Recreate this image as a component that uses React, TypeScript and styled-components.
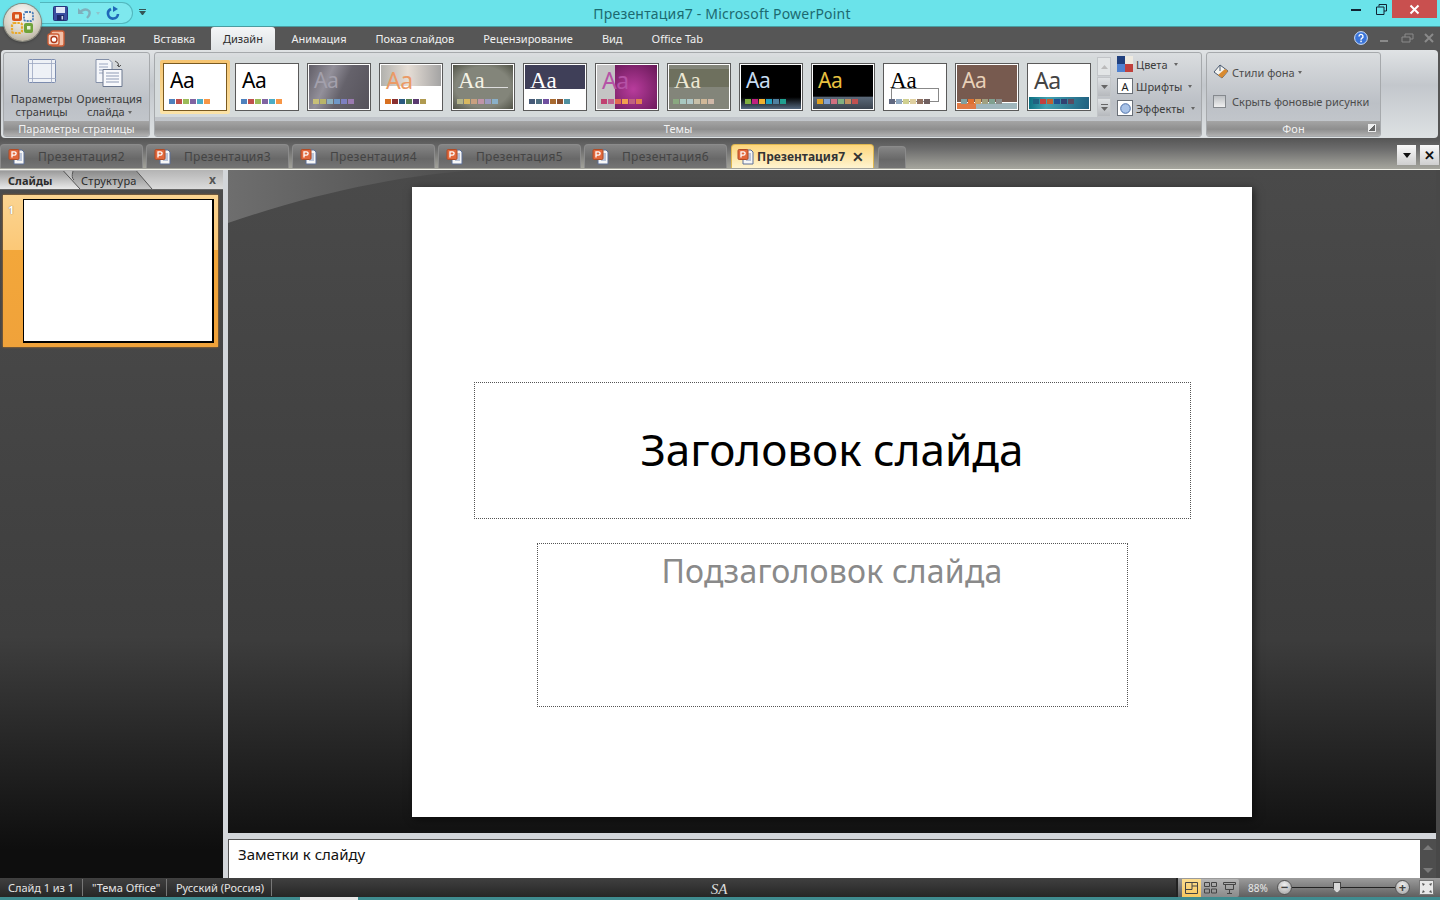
import React from "react";
import styled, { createGlobalStyle } from "styled-components";

const Global = createGlobalStyle`
  html, body { margin: 0; padding: 0; background: #000; }
  body { font-family: "Noto Sans", "Liberation Sans", sans-serif; font-size: 11px; }
  * { box-sizing: border-box; }
`;

const Window = styled.div`
  position: relative;
  width: 1440px;
  height: 900px;
  overflow: hidden;
  display: flex;
  flex-direction: column;
  background: #555;
`;

/* ---------- title bar ---------- */
const TitleBar = styled.div`
  height: 26px;
  flex: none;
  display: grid;
  grid-template-columns: 1fr auto 1fr;
  background: #6ae3ea;
  padding-left: 4px;
`;
const Qat = styled.div`
  display: flex;
  align-items: center;
  height: 22px;
  width: 93px;
  margin: 2px 0 0 36px;
  padding-left: 13px;
  border: 1px solid #52b6bd;
  border-left: none;
  border-radius: 0 12px 12px 0;
  background: #7ee8ee;
`;
const QatRow = styled.div`
  display: flex;
  align-items: flex-start;
`;
const QatGap = styled.span`
  width: 9px;
`;
const QatCaret = styled.span`
  margin: 0 6px 0 4px;
  border: 2.5px solid transparent;
  border-top: 3px solid #8ec4cc;
  border-bottom: none;
`;
const QatMore = styled.span`
  margin: 9px 0 0 6px;
  width: 7px;
  height: 6px;
  border-top: 1px solid #355;
  &::after {
    content: "";
    display: block;
    margin-top: 1px;
    border: 3px solid transparent;
    border-top: 4px solid #355;
    border-bottom: none;
  }
`;
const Title = styled.div`
  font-size: 14px;
  line-height: 27px;
  color: #1c6a70;
  letter-spacing: 0.2px;
`;
const WinControls = styled.div`
  display: flex;
  justify-content: flex-end;
  align-items: flex-start;
  padding-right: 3px;
`;
const WinBtn = styled.div<{ $w: number; $close?: boolean }>`
  width: ${(p) => p.$w}px;
  height: 18px;
  display: flex;
  align-items: center;
  justify-content: center;
  padding-top: ${(p) => (p.$close ? 0 : 1)}px;
  background: ${(p) => (p.$close ? "#c9504f" : "transparent")};
`;

const OfficeButton = styled.div`
  position: absolute;
  left: 4px;
  top: 4px;
  width: 37px;
  height: 37px;
  border-radius: 50%;
  background: radial-gradient(circle at 50% 30%, #fdfdfd 0%, #d9d4c8 55%, #a49c88 100%);
  box-shadow: 0 0 0 1px #8a8a80, 0 1px 3px rgba(0, 0, 0, 0.5);
  display: flex;
  align-items: center;
  justify-content: center;
`;

/* ---------- ribbon tabs ---------- */
const TabBar = styled.div`
  height: 24px;
  flex: none;
  display: flex;
  align-items: flex-end;
  padding-left: 46px;
  background: #565656;
  border-top: 1px solid #4a9ca0;
`;
const AddIn = styled.div`
  width: 20px;
  height: 23px;
  margin-right: 2px;
  display: flex;
  align-items: center;
  justify-content: center;
`;
const RibbonTab = styled.div<{ $active?: boolean; $wide?: boolean }>`
  height: 23px;
  padding: 0 12px;
  margin: 0 ${(p) => (p.$wide ? 2.5 : 2)}px;
  line-height: 24px;
  font-size: 11px;
  border-radius: 3px 3px 0 0;
  color: ${(p) => (p.$active ? "#2b2b2b" : "#f0f0f0")};
  background: ${(p) => (p.$active ? "linear-gradient(#f4f6f7, #dfe3e5)" : "transparent")};
`;
const TabSpacer = styled.div`
  flex: 1;
`;
const SmallControls = styled.div`
  display: flex;
  align-items: center;
  gap: 9px;
  height: 23px;
  padding-right: 5px;
  padding-bottom: 2px;
  color: #8d8d8d;
`;

/* ---------- ribbon ---------- */
const Ribbon = styled.div`
  height: 88px;
  flex: none;
  width: 1437px;
  margin-left: 1px;
  display: flex;
  gap: 4px;
  padding: 2px 0 1px 2px;
  border-radius: 4px;
  background: linear-gradient(#e0e3e5, #c3c7cc 40%, #dde1e3);
`;
const Group = styled.div<{ $w: number }>`
  width: ${(p) => p.$w}px;
  flex: none;
  display: flex;
  flex-direction: column;
  border: 1px solid #a6a9ac;
  border-radius: 3px;
  overflow: hidden;
  background: linear-gradient(#dadddf, #bcc0c6 60%, #c6cace);
`;
const GroupBody = styled.div`
  flex: 1;
  display: flex;
  min-height: 0;
`;
const GroupLabel = styled.div`
  position: relative;
  height: 15px;
  flex: none;
  text-align: center;
  line-height: 15px;
  font-size: 11px;
  color: #f2f2f2;
  background: linear-gradient(#a5a5a5, #8e8e8e 55%, #b0b0b0);
`;
const Launcher = styled.span`
  position: absolute;
  right: 4px;
  top: 3px;
  width: 8px;
  height: 8px;
  border: 1px solid #eee;
  background: linear-gradient(135deg, #eee 50%, #666 50%);
`;
const BigButtons = styled.div`
  display: flex;
  justify-content: center;
  gap: 4px;
  flex: 1;
  padding-top: 5px;
`;
const BigButton = styled.div`
  display: flex;
  flex-direction: column;
  align-items: center;
  color: #3c3c3c;
  line-height: 13px;
  font-size: 11px;
  text-align: center;
`;
const BigIcon = styled.div`
  height: 34px;
`;
const Arrow = styled.span`
  display: inline-block;
  margin-left: 3px;
  vertical-align: 2px;
  border: 2.5px solid transparent;
  border-top: 3px solid #666;
  border-bottom: none;
`;

const Gallery = styled.div`
  width: 942px;
  flex: none;
  margin-top: 4px;
  height: 60px;
  display: flex;
  align-items: center;
  gap: 8px;
  padding-left: 8px;
  background: #d5dadb;
`;
const TileFrame = styled.div<{ $sel?: boolean }>`
  flex: none;
  padding: 3px;
  margin: 0 -3px;
  background: ${(p) => (p.$sel ? "linear-gradient(#f6c470, #fbe3a8)" : "transparent")};
  border-radius: 2px;
`;
const Tile = styled.div<{ $bg: string; $sel?: boolean }>`
  position: relative;
  width: 64px;
  height: 48px;
  overflow: hidden;
  border: 1px solid ${(p) => (p.$sel ? "#7a5a20" : "#5a5a5a")};
  box-shadow: inset 0 0 0 1px #fff;
  background: ${(p) => p.$bg};
  display: flex;
  flex-direction: column;
`;
const TileBand = styled.div<{ $bg: string; $h: number }>`
  position: absolute;
  left: 1px;
  right: 1px;
  bottom: 1px;
  height: ${(p) => p.$h}px;
  background: ${(p) => p.$bg};
`;
const TileOutline = styled.div`
  position: absolute;
  left: 7px;
  top: 24px;
  width: 48px;
  height: 14px;
  border: 1px solid #888;
`;
const TileAa = styled.div<{ $c: string; $serif?: boolean; $big?: boolean }>`
  position: relative;
  height: 33px;
  padding-left: 6px;
  font-family: ${(p) => (p.$serif ? '"Liberation Serif", serif' : '"Noto Sans", sans-serif')};
  font-size: ${(p) => (p.$big ? 23 : p.$serif ? 23 : 21)}px;
  letter-spacing: ${(p) => (p.$serif ? 0 : -0.5)}px;
  line-height: 33px;
  color: ${(p) => p.$c};
`;
const SwatchRow = styled.div`
  position: relative;
  display: flex;
  gap: 1px;
  padding-left: 5px;
  margin-top: 2px;
`;
const Swatch = styled.i<{ $c: string }>`
  display: block;
  width: 6px;
  height: 5px;
  background: ${(p) => p.$c};
`;
const Scroller = styled.div`
  width: 14px;
  flex: none;
  margin-top: 4px;
  height: 60px;
  display: flex;
  flex-direction: column;
  gap: 1px;
  position: relative;
`;
const ScrollBtn = styled.div<{ $dim?: boolean }>`
  flex: 1;
  display: flex;
  align-items: center;
  justify-content: center;
  border: 1px solid #c2c5c8;
  background: ${(p) => (p.$dim ? "#e2e5e6" : "linear-gradient(#dfe2e4, #b6b9bd)")};
  color: #777;
`;
const ThemeOptions = styled.div`
  display: flex;
  flex-direction: column;
  gap: 6px;
  margin: 3px 0 0 6px;
`;
const OptionRow = styled.div`
  display: flex;
  align-items: center;
  gap: 3px;
  height: 16px;
  color: #3c3c3c;
`;
const OptIcon = styled.div`
  width: 16px;
  height: 16px;
  border: 1px solid #6a7078;
  background: #fff;
  display: flex;
  align-items: center;
  justify-content: center;
  font-size: 11px;
  color: #222;
`;
const FonBody = styled.div`
  flex: 1;
  display: flex;
  flex-direction: column;
  gap: 13px;
  padding: 11px 0 0 6px;
  color: #4c4c4c;
`;
const FonRow = styled.div`
  display: flex;
  align-items: center;
  height: 16px;
`;
const FonText = styled.span`
  margin-left: 2px;
`;
const Check = styled.span`
  width: 13px;
  height: 13px;
  margin-right: 6px;
  border: 1px solid #85898e;
  background: linear-gradient(#bcbfc3, #f0f0f0);
`;

/* ---------- document tabs ---------- */
const DocBar = styled.div`
  height: 32px;
  flex: none;
  display: flex;
  align-items: flex-end;
  padding: 0 1px 1px 0;
  gap: 3px;
  background: linear-gradient(#555 0%, #6c6c6c 35%, #a6a69e 100%);
  border-bottom: 1px solid #f2f2ea;
`;
const DocTab = styled.div<{ $active?: boolean; $empty?: boolean }>`
  width: ${(p) => (p.$empty ? 28 : 143)}px;
  height: ${(p) => (p.$empty ? 22 : 24)}px;
  flex: none;
  display: flex;
  align-items: center;
  padding-left: ${(p) => (p.$active ? 5 : 7)}px;
  border-radius: 4px 4px 0 0;
  border: 1px solid ${(p) => (p.$active ? "#e0b850" : "#8b8b8b")};
  border-bottom: none;
  font-size: 12px;
  font-weight: ${(p) => (p.$active ? 700 : 400)};
  letter-spacing: ${(p) => (p.$active ? 0 : 0.3)}px;
  color: ${(p) => (p.$active ? "#333" : "#444")};
  background: ${(p) =>
    p.$active ? "linear-gradient(#fdd67c, #fff4d0)" : "linear-gradient(#858585, #686868 60%, #747474)"};
  margin-left: ${(p) => (p.$active || p.$empty ? 1 : 0)}px;
`;
const DocName = styled.span<{ $active?: boolean }>`
  margin-left: ${(p) => (p.$active ? 3 : 13)}px;
`;
const DocClose = styled.span`
  margin-left: 7px;
  font-size: 14px;
  font-weight: 700;
  color: #333;
`;
const DocSpacer = styled.div`
  flex: 1;
`;
const DocBtn = styled.div`
  width: 19px;
  height: 20px;
  margin: 0 0 3px 1px;
  display: flex;
  align-items: center;
  justify-content: center;
  background: linear-gradient(#fafafa, #cfcfcf);
  color: #111;
  font-size: 13px;
  font-weight: 700;
  line-height: 1;
`;
const DownTri = styled.span`
  border: 4px solid transparent;
  border-top: 5px solid #111;
  border-bottom: none;
`;

/* ---------- body ---------- */
const Body = styled.div`
  flex: 1;
  min-height: 0;
  display: flex;
`;
const LeftPane = styled.div`
  width: 223px;
  flex: none;
  display: flex;
  flex-direction: column;
  background: linear-gradient(#4c4c4c 0%, #3e3e3e 66%, #0e0e0e 96%);
`;
const PaneTabs = styled.div`
  position: relative;
  height: 20px;
  flex: none;
  display: flex;
  align-items: stretch;
  padding-top: 1px;
  background: linear-gradient(#b4b4b4, #dcdcdc);
  border-bottom: 1px solid #666;
`;
const PaneTab = styled.div<{ $active?: boolean }>`
  position: relative;
  z-index: ${(p) => (p.$active ? 1 : 0)};
  width: ${(p) => (p.$active ? 80 : 79)}px;
  margin-right: -7px;
  padding-left: 8px;
  line-height: 20px;
  font-size: 11px;
  font-weight: ${(p) => (p.$active ? 700 : 400)};
  letter-spacing: ${(p) => (p.$active ? 0 : 0.25)}px;
  color: #2b2b2b;
  clip-path: polygon(0 0, 80% 0, 100% 100%, 0 100%);
  background: ${(p) => (p.$active ? "linear-gradient(#9b9b9b, #eaeaea)" : "linear-gradient(#8a8a8a, #c8c8c8)")};
`;
const PaneEdges = styled.svg`
  position: absolute;
  left: 0;
  top: 0;
  z-index: 2;
`;
const PaneClose = styled.div`
  margin-left: auto;
  padding-right: 7px;
  font-size: 12px;
  line-height: 18px;
  font-weight: 700;
  color: #555;
`;
const Thumb = styled.div`
  margin: 5px 0 0 3px;
  width: 215px;
  height: 152px;
  padding: 4px 4px 4px 20px;
  position: relative;
  background: linear-gradient(#fbd491 0%, #fbc877 36%, #f3a73a 36%, #f0a23a 100%);
  box-shadow: 0 0 2px #c07820;
`;
const ThumbNum = styled.span`
  position: absolute;
  left: 5px;
  top: 7px;
  font-size: 11px;
  font-weight: 700;
  color: #fff;
  text-shadow: 0 0 1px #543;
`;
const ThumbSlide = styled.div`
  width: 191px;
  height: 144px;
  background: #fff;
  border: 1px solid #000;
  border-right-width: 2px;
  border-bottom-width: 2px;
`;
const Splitter = styled.div`
  width: 5px;
  flex: none;
  background: #d3d6da;
`;
const RightCol = styled.div`
  flex: 1;
  min-width: 0;
  display: flex;
  flex-direction: column;
`;
const Stage = styled.div`
  position: relative;
  height: 663px;
  flex: none;
  padding: 17px 0 0 184px;
  background: linear-gradient(#4a4a4a 0%, #3c3c3c 71%, #121212 100%);
  border-right: 4px solid #484848;
  overflow: hidden;
`;
const Swoosh = styled.svg`
  position: absolute;
  left: 0;
  top: 0;
`;
const Slide = styled.div`
  position: relative;
  width: 840px;
  height: 630px;
  background: #fff;
  box-shadow: 2px 2px 8px rgba(0, 0, 0, 0.55);
  display: flex;
  flex-direction: column;
  align-items: center;
  padding-top: 195px;
  gap: 24px;
`;
const Placeholder = styled.div<{ $w: number; $h: number }>`
  width: ${(p) => p.$w}px;
  height: ${(p) => p.$h}px;
  border: 1px dotted #555;
  text-align: center;
`;
const SlideTitle = styled.div`
  font-size: 44px;
  line-height: 137px;
  color: #000;
  margin-top: -2px;
`;
const SlideSub = styled.div`
  font-size: 32px;
  line-height: 54px;
  color: #8a8a8a;
  letter-spacing: 0.2px;
`;
const HSplit = styled.div`
  height: 6px;
  flex: none;
  background: #d3d6da;
  border-right: 4px solid #484848;
`;
const NotesRow = styled.div`
  flex: 1;
  display: flex;
  min-height: 0;
`;
const Notes = styled.div`
  width: 1192px;
  flex: none;
  padding-left: 9px;
  background: #fff;
  border-top: 1px solid #555;
  border-left: 1px solid #555;
  font-size: 15px;
  line-height: 29px;
  color: #111;
`;
const NotesScroll = styled.div`
  width: 16px;
  flex: none;
  display: flex;
  flex-direction: column;
  justify-content: space-between;
  align-items: center;
  padding: 6px 0 5px;
  background: #4e4e4e;
`;
const NotesEdge = styled.div`
  flex: 1;
  background: #484848;
`;
const Tri = styled.span<{ $up?: boolean }>`
  border: 5px solid transparent;
  ${(p) => (p.$up ? "border-bottom: 5px solid #7a7a7a; border-top: none;" : "border-top: 5px solid #7a7a7a; border-bottom: none;")}
`;

/* ---------- status bar ---------- */
const Status = styled.div`
  height: 19px;
  flex: none;
  display: flex;
  align-items: stretch;
  color: #e4e4e4;
  font-size: 11px;
  background: linear-gradient(#404040, #262626);
`;
const StatusItem = styled.div<{ $w: number; $pad?: number }>`
  width: ${(p) => p.$w}px;
  flex: none;
  padding-left: ${(p) => p.$pad ?? 8}px;
  line-height: 17px;
  letter-spacing: -0.04px;
  border-right: 1px solid #777;
  margin: 1px 0;
`;
const Signature = styled.div`
  flex: 1;
  text-align: center;
  padding-right: 10px;
  font-family: "Liberation Serif", serif;
  font-style: italic;
  font-size: 15px;
  line-height: 22px;
  color: #dcdcdc;
`;
const ZoomArea = styled.div`
  width: 264px;
  flex: none;
  display: flex;
  align-items: center;
  padding-left: 4px;
  background: linear-gradient(#9c9c9c, #5f5f5f);
  border-left: 2px solid #222;
`;
const Views = styled.div`
  display: flex;
  height: 18px;
  border-radius: 2px;
  background: linear-gradient(#b5b5b5, #8a8a8a);
`;
const ViewBtn = styled.div<{ $on?: boolean }>`
  width: 19px;
  display: flex;
  align-items: center;
  justify-content: center;
  background: ${(p) => (p.$on ? "linear-gradient(#fbdc8e, #f8c860)" : "transparent")};
`;
const ZoomPct = styled.span`
  width: 20px;
  margin: 0 9px 0 9px;
  color: #e8e8e8;
  font-size: 10px;
`;
const RoundBtn = styled.div`
  width: 15px;
  height: 15px;
  flex: none;
  border-radius: 50%;
  border: 1px solid #555;
  background: radial-gradient(circle at 50% 30%, #f0f0f0, #a0a0a0);
  display: flex;
  align-items: center;
  justify-content: center;
  font-size: 13px;
  line-height: 1;
  font-weight: 700;
  color: #444;
`;
const Track = styled.div`
  position: relative;
  width: 103px;
  flex: none;
  height: 1px;
  background: #222;
`;
const Thumbler = styled.span`
  position: absolute;
  left: 41px;
  top: -5px;
  width: 8px;
  height: 11px;
  background: #d8d8d8;
  border: 1px solid #444;
  clip-path: polygon(0 0, 100% 0, 100% 60%, 50% 100%, 0 60%);
`;
const FitBtn = styled.div`
  width: 15px;
  height: 15px;
  margin-left: 9px;
  border: 1px solid #777;
  background: #e8e8e8;
  display: flex;
  align-items: center;
  justify-content: center;
`;
const TaskStrip = styled.div`
  height: 3px;
  flex: none;
  display: flex;
  background: #3f8c90;
`;
const TaskItem = styled.div`
  width: 58px;
  margin-left: 300px;
  background: #e8e8e8;
`;

/* ---------- drawings ---------- */
const PptIcon = () => (
  <svg width="17" height="17" viewBox="0 0 17 17">
    <path d="M6 2h8l2 2v12H6z" fill="#f6f6f6" stroke="#5c6f96" />
    <path d="M9 6h5M9 8h5M9 10h5M9 12h5" stroke="#7f93bd" />
    <rect x="1" y="1.5" width="10" height="10" rx="1.2" fill="#e2683c" stroke="#b04a24" />
    <path d="M4 9.5V3.8h2.4a1.6 1.6 0 0 1 0 3.4H4" fill="none" stroke="#fff" strokeWidth="1.3" />
  </svg>
);

const OfficeLogo = () => (
  <svg width="27" height="27" viewBox="0 0 27 27">
    <rect x="3" y="3" width="10" height="9" rx="2" fill="#d8541e" />
    <rect x="6" y="5.5" width="4" height="4" fill="#f8e4c8" />
    <rect x="15" y="3" width="9" height="9" rx="2" fill="none" stroke="#4d7fb8" strokeWidth="1.8" strokeDasharray="2 1" />
    <rect x="3" y="14" width="10" height="10" rx="2" fill="none" stroke="#e9a92b" strokeWidth="2.2" strokeDasharray="2.4 1" />
    <rect x="15" y="14" width="9" height="10" rx="2" fill="#6fa33a" />
    <rect x="18" y="17" width="3.5" height="3.5" fill="#e8f2d8" />
  </svg>
);

const SaveIcon = () => (
  <svg width="15" height="15" viewBox="0 0 15 15">
    <rect x="0.5" y="0.5" width="14" height="14" rx="1" fill="#3a4ea0" stroke="#27347a" />
    <rect x="3" y="1" width="9" height="6" fill="#dfe6f6" />
    <rect x="4" y="9" width="7" height="5.5" fill="#1c2a6a" />
    <rect x="8.5" y="10" width="1.6" height="3.5" fill="#c8d0e8" />
  </svg>
);

const UndoIcon = () => (
  <svg width="15" height="14" viewBox="0 0 15 14">
    <path d="M2 7 Q8 1 12 5 Q14 8 10 12" fill="none" stroke="#7fb0bc" strokeWidth="2.4" />
    <path d="M1 2v6h6z" fill="#7fb0bc" />
  </svg>
);

const RedoIcon = () => (
  <svg width="15" height="15" viewBox="0 0 15 15">
    <path d="M5 3 A5 5 0 1 0 12 8" fill="none" stroke="#1f68b8" strokeWidth="2.6" />
    <path d="M7 0v6l5-3z" fill="#1f68b8" />
  </svg>
);

const PageSetupIcon = () => (
  <svg width="30" height="26" viewBox="0 0 30 26">
    <rect x="1.5" y="1.5" width="27" height="23" rx="1" fill="#eef1f6" stroke="#7c8cae" />
    <path d="M1 5.500h28M5.500 1v24M24.500 1v24M1 20.500h28" stroke="#9aa6c0" strokeWidth="0.8" />
  </svg>
);

const OrientIcon = () => (
  <svg width="30" height="30" viewBox="0 0 30 30">
    <path d="M2 1.5h13l3 3v20H2z" fill="#f4f6fa" stroke="#8490a8" />
    <path d="M5 6h9M5 9h9M5 12h9M5 15h9" stroke="#9aa6c0" />
    <path d="M9 11.5h19v17H9z" fill="#f8f9fc" stroke="#6c7890" />
    <path d="M12 15h13M12 18h13M12 21h13M12 24h13" stroke="#8f9bb5" />
    <path d="M21 3q4 1 4 6M25 9l-2-2M25 9l2-2" fill="none" stroke="#555" />
  </svg>
);

const ColorsIcon = () => (
  <svg width="16" height="16" viewBox="0 0 16 16">
    <rect width="8" height="8" fill="#20407e" />
    <rect x="8" width="8" height="8" fill="#eeeae0" />
    <rect y="8" width="8" height="8" fill="#4f81d0" />
    <rect x="8" y="8" width="8" height="8" fill="#c0403c" />
  </svg>
);

const EffectIcon = () => (
  <svg width="11" height="11" viewBox="0 0 11 11">
    <circle cx="5.5" cy="5.5" r="4.8" fill="#a9c3e8" stroke="#4d70a8" />
  </svg>
);

const BucketIcon = () => (
  <svg width="17" height="16" viewBox="0 0 17 16">
    <path d="M7 1 L15 7 L9 14 L1 8 Z" fill="#f4f4f0" stroke="#4b5a70" />
    <path d="M5 11 L9 14 L15 7 L12 5 Z" fill="#d88a30" />
    <path d="M7 1 v6" stroke="#4b5a70" />
  </svg>
);

const HelpIcon = () => (
  <svg width="14" height="14" viewBox="0 0 14 14">
    <circle cx="7" cy="7" r="6.4" fill="#3a74d8" stroke="#cfe0fa" />
    <path d="M5 5.4a2 2 0 1 1 3 1.7c-.7.4-1 .8-1 1.6" fill="none" stroke="#fff" strokeWidth="1.4" />
    <rect x="6.3" y="9.6" width="1.5" height="1.6" fill="#fff" />
  </svg>
);

const ViewIcon = ({ d }: { d: string }) => (
  <svg width="13" height="12" viewBox="0 0 13 12">
    <path d={d} fill="none" stroke="#444" />
  </svg>
);

const QUAD = ["#4f81bd", "#c0504d", "#9bbb59", "#8064a2", "#4bacc6", "#f79646"];

type Theme = {
  bg: string;
  aa: string;
  sw: string[];
  serif?: boolean;
  big?: boolean;
  sel?: boolean;
  band?: string;
  bandH?: number;
  outline?: boolean;
};

const themes: Theme[] = [
  { bg: "#fff", aa: "#000", sw: QUAD, sel: true },
  { bg: "#fff", aa: "#000", sw: QUAD },
  { bg: "linear-gradient(115deg, #5e5b64 0%, #93909a 32%, #65626b 55%, #55525a 100%)", aa: "#a3a0ac", sw: ["#c8c078", "#b8b468", "#8cb0c0", "#6f98c8", "#7d80c0", "#9a7ab0"] },
  { bg: "linear-gradient(90deg, #b0b0ac, #e6ded6 45%, #a2a2a2)", aa: "#eb9a66", big: true, sw: ["#d87020", "#8a3030", "#2a5a80", "#5a8050", "#5a3a70", "#b09a50"], band: "#fff", bandH: 23 },
  { bg: "linear-gradient(#ddd, #ddd) no-repeat 30px 23px / 26px 1px, radial-gradient(ellipse, #83857a 62%, #4c4e42 100%)", aa: "#f4f2e4", serif: true, sw: ["#b5b58a", "#d8b860", "#c8a080", "#c094a8", "#9a9ac0", "#8ab0c8"] },
  { bg: "linear-gradient(#3f3f58 0 54%, #fff 54%)", aa: "#fff", serif: true, sw: ["#465a78", "#4f6f80", "#7050a0", "#a86a30", "#8a5030", "#4f90a0"] },
  { bg: "linear-gradient(90deg, #c4c4c4 0 30%, transparent 30%), radial-gradient(circle at 60% 55%, #b83c9c, #4c0c40)", aa: "#b552a6", big: true, sw: ["#c04070", "#c06090", "#e06a50", "#f0a050", "#c06080", "#e08050"] },
  { bg: "linear-gradient(#83857a 0 10%, #6e705e 10% 50%, #83857a 50%)", aa: "#ece8d4", serif: true, sw: ["#8aa880", "#a8c8c0", "#b0c8c8", "#c8c0a8", "#d0b898", "#d0b8a8"] },
  { bg: "linear-gradient(#000 0 72%, #5a7088 100%)", aa: "#c8dcf0", sw: ["#80b040", "#c02080", "#f0b030", "#20a0c0", "#5080a0", "#20a090"] },
  { bg: "linear-gradient(#000 0 70%, #5a6878 72%, #39414c 100%)", aa: "#e8c040", sw: ["#e0a020", "#80a0d0", "#d07080", "#80b080", "#c09060", "#c05050"] },
  { bg: "#fff", aa: "#000", serif: true, outline: true, sw: ["#606880", "#90a8c0", "#d0d090", "#e0d0a0", "#907060", "#706060"] },
  { bg: "#775a4f", aa: "#e8d0b8", sw: ["#80a0a0", "#e07030", "#d0a060", "#a0a080", "#80a090", "#8a8a88"], band: "linear-gradient(#fff 0 1px, transparent 1px), linear-gradient(90deg, #e07a45 0 32%, #a0b6bc 32%)", bandH: 7 },
  { bg: "#fff", aa: "#444", big: true, sw: ["#206080", "#c04040", "#c06030", "#205090", "#304070", "#5a4a60"], band: "linear-gradient(100deg, #0a6f80, #40a0b0 30%, #206080)", bandH: 12 },
];

const docs = ["Презентация2", "Презентация3", "Презентация4", "Презентация5", "Презентация6"];
const tabsBefore = ["Главная", "Вставка"];
const tabsAfter = ["Анимация", "Показ слайдов", "Рецензирование", "Вид", "Office Tab"];

export default function App() {
  return (
    <Window>
      <Global />
      <TitleBar>
        <QatRow>
          <Qat>
            <SaveIcon />
            <QatGap />
            <UndoIcon />
            <QatCaret />
            <RedoIcon />
          </Qat>
          <QatMore />
        </QatRow>
        <Title>Презентация7 - Microsoft PowerPoint</Title>
        <WinControls>
          <WinBtn $w={29}>
            <svg width="10" height="3"><rect width="10" height="2" y="1" fill="#123" /></svg>
          </WinBtn>
          <WinBtn $w={22}>
            <svg width="11" height="11" viewBox="0 0 11 11">
              <path d="M3 2.5V.5h7.5V7H8M.5 3h7.5v7.500H.5z" fill="none" stroke="#123" />
            </svg>
          </WinBtn>
          <WinBtn $w={45} $close>
            <svg width="11" height="11" viewBox="0 0 11 11">
              <path d="M1.500 1.500l8 8M9.500 1.500l-8 8" stroke="#fff" strokeWidth="2" />
            </svg>
          </WinBtn>
        </WinControls>
      </TitleBar>

      <TabBar>
        <AddIn>
          <svg width="18" height="17" viewBox="0 0 18 17">
            <rect x="4" y="1" width="13" height="15" rx="2" fill="#f2c0a8" stroke="#cc5c34" strokeWidth="1.400" />
            <rect x="1" y="4" width="11" height="11" rx="2" fill="#f8d6c6" stroke="#cc5c34" strokeWidth="1.400" />
            <circle cx="7" cy="9.500" r="3" fill="#fff" stroke="#b03818" strokeWidth="1.400" />
          </svg>
        </AddIn>
        {tabsBefore.map((t) => (
          <RibbonTab key={t}>{t}</RibbonTab>
        ))}
        <RibbonTab $active>Дизайн</RibbonTab>
        {tabsAfter.map((t) => (
          <RibbonTab key={t} $wide>{t}</RibbonTab>
        ))}
        <TabSpacer />
        <SmallControls>
          <HelpIcon />
          <svg width="14" height="10"><rect x="3" y="7" width="8" height="2" fill="#8a8a8a" /></svg>
          <svg width="14" height="10" viewBox="0 0 14 10"><path d="M2 4h8v5H2zM5 4V1h8v5h-3" fill="none" stroke="#8a8a8a" /></svg>
          <svg width="12" height="10" viewBox="0 0 12 10"><path d="M2 1l8 8M10 1l-8 8" stroke="#8a8a8a" strokeWidth="2" /></svg>
        </SmallControls>
      </TabBar>

      <Ribbon>
        <Group $w={147}>
          <GroupBody>
            <BigButtons>
              <BigButton>
                <BigIcon><PageSetupIcon /></BigIcon>
                <span>Параметры</span>
                <span>страницы</span>
              </BigButton>
              <BigButton>
                <BigIcon><OrientIcon /></BigIcon>
                <span>Ориентация</span>
                <span>слайда<Arrow /></span>
              </BigButton>
            </BigButtons>
          </GroupBody>
          <GroupLabel>Параметры страницы</GroupLabel>
        </Group>

        <Group $w={1048}>
          <GroupBody>
            <Gallery>
              {themes.map((t, i) => (
                <TileFrame key={i} $sel={t.sel}>
                  <Tile $bg={t.bg} $sel={t.sel}>
                    {t.band && <TileBand $bg={t.band} $h={t.bandH ?? 0} />}
                    <TileAa $c={t.aa} $serif={t.serif} $big={t.big}>Aa</TileAa>
                    {t.outline && <TileOutline />}
                    <SwatchRow>
                      {t.sw.map((c, j) => (
                        <Swatch key={j} $c={c} />
                      ))}
                    </SwatchRow>
                  </Tile>
                </TileFrame>
              ))}
            </Gallery>
            <Scroller>
              <ScrollBtn $dim><svg width="7" height="4"><path d="M0 4l3.500-4 3.500 4z" fill="#bbb" /></svg></ScrollBtn>
              <ScrollBtn><svg width="7" height="4"><path d="M0 0l3.500 4 3.500-4z" fill="#666" /></svg></ScrollBtn>
              <ScrollBtn><svg width="7" height="7"><path d="M0 0h7v1H0zM0 3l3.500 4 3.500-4z" fill="#666" /></svg></ScrollBtn>
            </Scroller>
            <ThemeOptions>
              <OptionRow>
                <ColorsIcon />
                <span>Цвета</span><Arrow />
              </OptionRow>
              <OptionRow>
                <OptIcon>A</OptIcon>
                <span>Шрифты</span><Arrow />
              </OptionRow>
              <OptionRow>
                <OptIcon><EffectIcon /></OptIcon>
                <span>Эффекты</span><Arrow />
              </OptionRow>
            </ThemeOptions>
          </GroupBody>
          <GroupLabel>Темы</GroupLabel>
        </Group>

        <Group $w={175}>
          <FonBody>
            <FonRow>
              <BucketIcon />
              <FonText>Стили фона</FonText><Arrow />
            </FonRow>
            <FonRow>
              <Check />
              <span>Скрыть фоновые рисунки</span>
            </FonRow>
          </FonBody>
          <GroupLabel>Фон<Launcher /></GroupLabel>
        </Group>
      </Ribbon>

      <DocBar>
        {docs.map((d) => (
          <DocTab key={d}>
            <PptIcon />
            <DocName>{d}</DocName>
          </DocTab>
        ))}
        <DocTab $active>
          <PptIcon />
          <DocName $active>Презентация7</DocName>
          <DocClose>✕</DocClose>
        </DocTab>
        <DocTab $empty />
        <DocSpacer />
        <DocBtn><DownTri /></DocBtn>
        <DocBtn>✕</DocBtn>
      </DocBar>

      <Body>
        <LeftPane>
          <PaneTabs>
            <PaneTab $active>Слайды</PaneTab>
            <PaneTab>Структура</PaneTab>
            <PaneClose>x</PaneClose>
            <PaneEdges width="160" height="20" viewBox="0 0 160 20">
              <path d="M63.500 1L80 19M136.500 1L152 19M73 1Q71 8 74 10" fill="none" stroke="#555" />
            </PaneEdges>
          </PaneTabs>
          <Thumb>
            <ThumbNum>1</ThumbNum>
            <ThumbSlide />
          </Thumb>
        </LeftPane>
        <Splitter />
        <RightCol>
          <Stage>
            <Swoosh width="252" height="56" viewBox="0 0 252 56">
              <defs>
                <linearGradient id="swoosh" x1="0" x2="1" y1="0" y2="0">
                  <stop offset="0" stopColor="#6e6e6e" />
                  <stop offset="1" stopColor="#4c4c4c" />
                </linearGradient>
              </defs>
              <path d="M0 0H252C180 4 90 22 0 53Z" fill="url(#swoosh)" />
            </Swoosh>
            <Slide>
              <Placeholder $w={717} $h={137}>
                <SlideTitle>Заголовок слайда</SlideTitle>
              </Placeholder>
              <Placeholder $w={591} $h={164}>
                <SlideSub>Подзаголовок слайда</SlideSub>
              </Placeholder>
            </Slide>
          </Stage>
          <HSplit />
          <NotesRow>
            <Notes>Заметки к слайду</Notes>
            <NotesScroll>
              <Tri $up />
              <Tri />
            </NotesScroll>
            <NotesEdge />
          </NotesRow>
        </RightCol>
      </Body>

      <Status>
        <StatusItem $w={83}>Слайд 1 из 1</StatusItem>
        <StatusItem $w={84} $pad={9}>"Тема Office"</StatusItem>
        <StatusItem $w={105} $pad={9}>Русский (Россия)</StatusItem>
        <Signature>SA</Signature>
        <ZoomArea>
          <Views>
            <ViewBtn $on><ViewIcon d="M.5.5h12v11H.5zM7 .5v7H.5M7 4h5" /></ViewBtn>
            <ViewBtn><ViewIcon d="M.5.5h5v4h-5zM7.500.5h5v4h-5zM.5 7h5v4h-5zM7.500 7h5v4h-5z" /></ViewBtn>
            <ViewBtn><ViewIcon d="M.5.5h12v2H.5zM2.500 2.500h8v5h-8zM6.500 7.500v4M4 11.500h5" /></ViewBtn>
          </Views>
          <ZoomPct>88%</ZoomPct>
          <RoundBtn>−</RoundBtn>
          <Track><Thumbler /></Track>
          <RoundBtn>+</RoundBtn>
          <FitBtn>
            <svg width="10" height="10" viewBox="0 0 10 10">
              <path d="M0 0l3 1-2 2zM10 0l-1 3-2-2zM0 10l1-3 2 2zM10 10l-3-1 2-2z" fill="#555" />
            </svg>
          </FitBtn>
        </ZoomArea>
      </Status>
      <TaskStrip><TaskItem /></TaskStrip>

      <OfficeButton><OfficeLogo /></OfficeButton>
    </Window>
  );
}
